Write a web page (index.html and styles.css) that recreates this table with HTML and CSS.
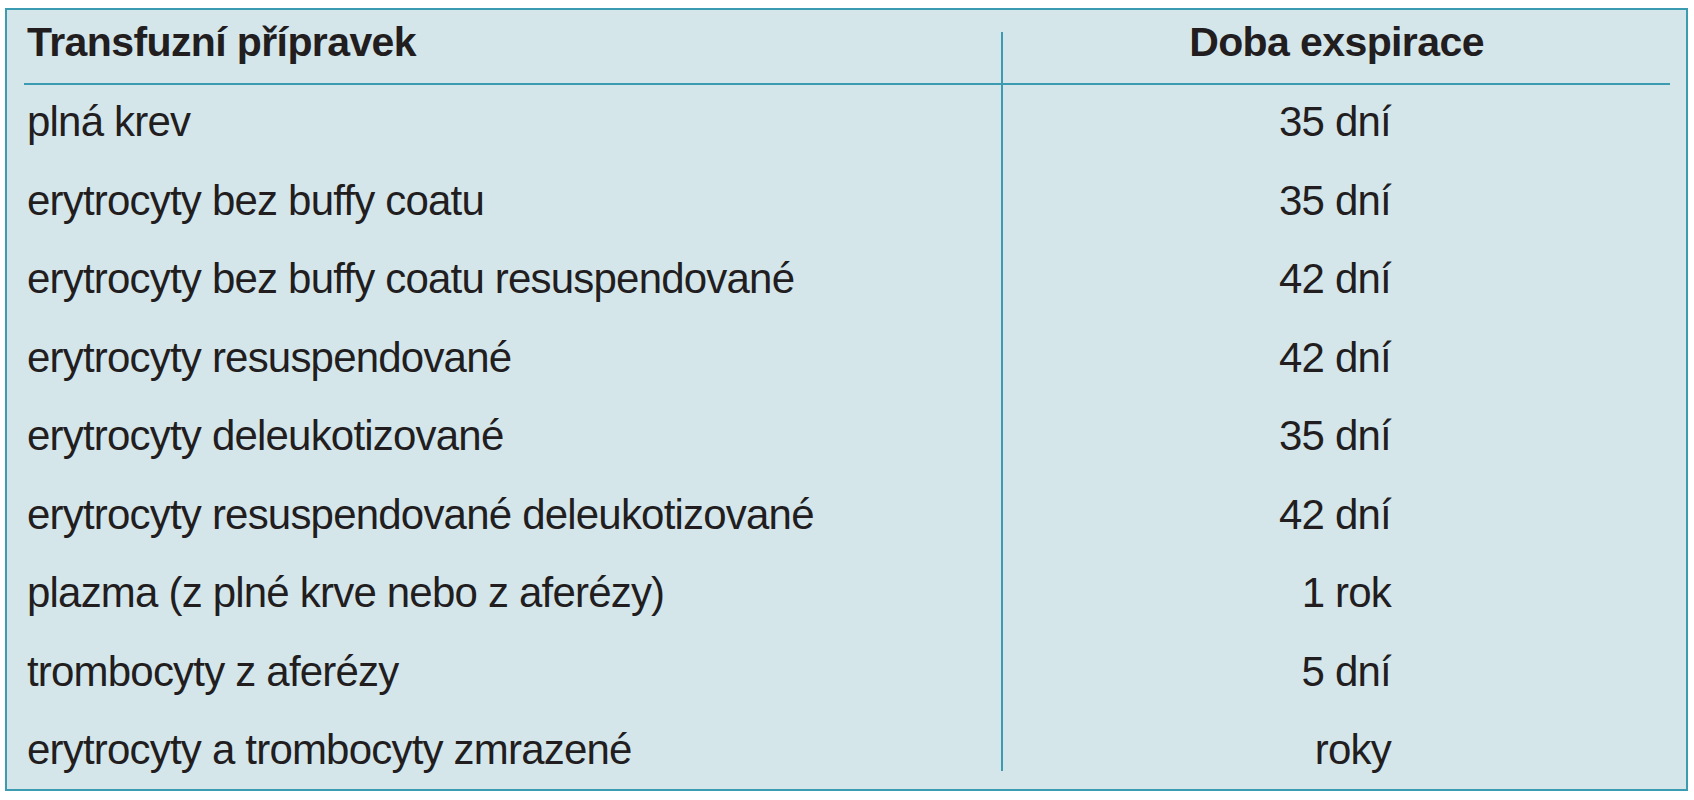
FILE: index.html
```html
<!DOCTYPE html>
<html lang="cs">
<head>
<meta charset="utf-8">
<title>Transfuzní přípravky</title>
<link rel="stylesheet" href="styles.css">
</head>
<body>
<div class="box">
  <div class="row head">
    <div class="cell name">Transfuzní přípravek</div>
    <div class="cell val">Doba exspirace</div>
  </div>
  <div class="row"><div class="cell name">plná krev</div><div class="cell val">35 dní</div></div>
  <div class="row"><div class="cell name">erytrocyty bez buffy coatu</div><div class="cell val">35 dní</div></div>
  <div class="row"><div class="cell name">erytrocyty bez buffy coatu resuspendované</div><div class="cell val">42 dní</div></div>
  <div class="row"><div class="cell name">erytrocyty resuspendované</div><div class="cell val">42 dní</div></div>
  <div class="row"><div class="cell name">erytrocyty deleukotizované</div><div class="cell val">35 dní</div></div>
  <div class="row"><div class="cell name">erytrocyty resuspendované deleukotizované</div><div class="cell val">42 dní</div></div>
  <div class="row"><div class="cell name">plazma (z plné krve nebo z aferézy)</div><div class="cell val">1 rok</div></div>
  <div class="row"><div class="cell name">trombocyty z aferézy</div><div class="cell val">5 dní</div></div>
  <div class="row last"><div class="cell name">erytrocyty a trombocyty zmrazené</div><div class="cell val">roky</div></div>
</div>
</body>
</html>
```
FILE: styles.css
```css
html, body {
  margin: 0;
  padding: 0;
  background: #ffffff;
}

body {
  font-family: "Liberation Sans", Arial, sans-serif;
  color: #221e1f;
}

.box {
  box-sizing: border-box;
  width: 1683px;
  margin: 8px 0 0 5px;
  background: #d5e6eb;
  border: 2px solid #3b9bb0;
  padding: 0 16px 18px 17px;
}

.row {
  display: flex;
  height: 78.5px;
}

.cell {
  box-sizing: border-box;
  font-size: 42px;
  letter-spacing: -0.8px;
  line-height: 74px;
  white-space: nowrap;
}

.name {
  width: 979px;
  flex: none;
  padding-left: 3px;
  border-right: 2px solid #3b9bb0;
}

.val {
  flex: 1;
  text-align: right;
  padding-right: 279px;
}

.row.last {
  height: 58px;
}

.row.head {
  height: 73px;
  border-bottom: 2px solid #3b9bb0;
}

.head .cell {
  font-weight: bold;
  font-size: 41px;
  letter-spacing: -0.6px;
  line-height: 42px;
  padding-top: 11px;
}

.head .name {
  border-right: none;
  background: linear-gradient(#3b9bb0, #3b9bb0) no-repeat right bottom / 2px 51px;
}

.head .val {
  text-align: center;
  padding-right: 0;
}
```
